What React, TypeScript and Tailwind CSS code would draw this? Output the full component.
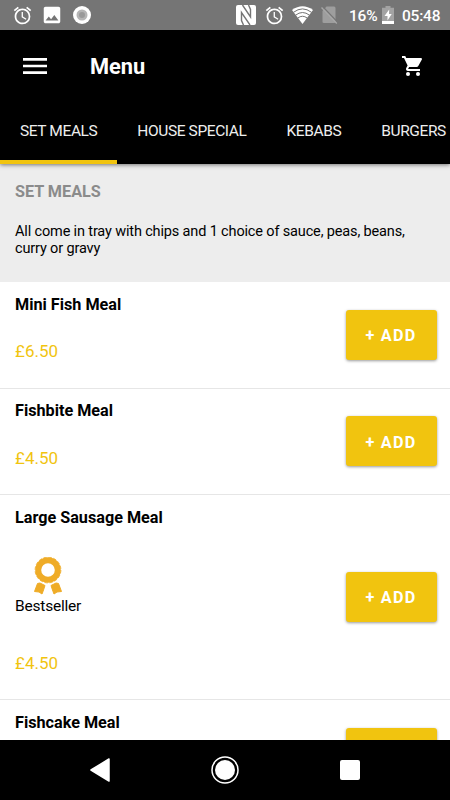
import React from 'react';
import { MdAccessAlarm, MdImage, MdMenu } from 'react-icons/md';

interface MealItem {
  name: string;
  price: string;
  bestseller?: boolean;
}

const tabs = ['SET MEALS', 'HOUSE SPECIAL', 'KEBABS', 'BURGERS'];

const meals: MealItem[] = [
  { name: 'Mini Fish Meal', price: '£6.50' },
  { name: 'Fishbite Meal', price: '£4.50' },
  { name: 'Large Sausage Meal', price: '£4.50', bestseller: true },
  { name: 'Fishcake Meal', price: '£4.50' },
];

function NfcIcon() {
  return (
    <svg className="ml-[145px] h-5 w-5 shrink-0" viewBox="0 0 20 20">
      <rect width="20" height="20" rx="2" fill="#fff" />
      <path d="M6.500 0 14.500 12V4.500L12.500 0" fill="none" stroke="#757575" strokeWidth="1.400" />
      <path d="M7.500 20 5.500 15.500V7.500L14 20" fill="none" stroke="#757575" strokeWidth="1.400" />
    </svg>
  );
}

function WifiIcon() {
  return (
    <svg className="ml-[7px] h-[18px] w-[21px] shrink-0" viewBox="0 0 21 18">
      <path d="M0 4Q10.500-3.500 21 4L10.500 18z" fill="#fff" />
      <path d="M1.500 6.300Q10.500-.5 19.500 6.300M3.500 9.200Q10.500 3.800 17.500 9.200M5.800 12Q10.500 8.500 15.200 12" fill="none" stroke="#757575" strokeWidth="1" />
    </svg>
  );
}

function NoSimIcon() {
  return (
    <svg className="ml-2 h-[18px] w-[17px] shrink-0" viewBox="0 0 17 18">
      <path d="M5.500.5H13q1.500 0 1.500 1.500v14q0 1-1.500 1H3q-1.500 0-1.500-1V5z" fill="#9e9e9e" />
      <path d="M1.800.7 17 16.600" stroke="#757575" strokeWidth="1.300" />
      <path d="M.5 1.500 15.800 17.500" stroke="#a8a8a8" strokeWidth="1.300" />
    </svg>
  );
}

function BatteryIcon() {
  return (
    <svg className="h-[18px] w-3 shrink-0" viewBox="0 0 12 18">
      <path d="M3.500 0h5v1.800H12V15H0V1.800h3.500z" fill="#a3a3a3" />
      <path d="M0 15h12v3H0zM7.200 3.500 2.500 10h3v4.500L9.700 8H7z" fill="#fff" />
    </svg>
  );
}

function CartIcon() {
  return (
    <svg className="size-6 shrink-0" viewBox="0 0 24 24" fill="currentColor">
      <path d="M1 2v2h2l3.600 7.600-1.350 2.400c-.8 1.400.2 3 1.750 3h12v-2H7.420a.25.25 0 0 1-.22-.37L8.100 13h7.450c.75 0 1.400-.4 1.750-1l3.580-6.500A1 1 0 0 0 20 4H5.200l-.93-2z" />
      <circle cx="7" cy="20" r="2" />
      <circle cx="17" cy="20" r="2" />
    </svg>
  );
}

function StatusBar() {
  return (
    <div className="flex h-[30px] shrink-0 items-center bg-[#757575] text-[15.5px] font-medium tracking-[-0.2px] text-white">
      <MdAccessAlarm className="ml-3 size-[21px] shrink-0" />
      <MdImage className="ml-2 size-[22px] shrink-0" />
      <svg className="ml-[10px] h-[18px] w-[18px] shrink-0" viewBox="0 0 18 18">
        <circle cx="9" cy="9" r="9" fill="#fff" />
        <circle cx="9" cy="9" r="5.500" fill="#b5b5b5" />
        <circle cx="9" cy="9" r="3" fill="#999" />
      </svg>
      <NfcIcon />
      <MdAccessAlarm className="ml-2 size-[21px] shrink-0" />
      <WifiIcon />
      <NoSimIcon />
      <span className="ml-[11px] w-[33px] shrink-0 whitespace-nowrap pt-px leading-5">16%</span>
      <BatteryIcon />
      <span className="ml-2 whitespace-nowrap pt-px leading-5">05:48</span>
    </div>
  );
}

function AppBar() {
  return (
    <div className="flex h-[70px] shrink-0 items-center bg-black pt-[2px] pl-[19px] pr-[25px] text-white">
      <MdMenu className="size-8 shrink-0" />
      <h1 className="ml-[39px] flex-1 pt-px text-[21.8px] font-bold leading-7">Menu</h1>
      <CartIcon />
    </div>
  );
}

function CategoryTabs() {
  return (
    <div className="relative z-10 flex h-16 shrink-0 overflow-x-clip bg-black shadow-[0_1px_4px_rgba(0,0,0,0.5)]">
      {tabs.map((tab, index) => (
        <button
          key={tab}
          className={`flex h-16 shrink-0 items-center border-b-[4px] px-5 pt-[3px] text-[15.5px] tracking-[-0.4px] text-[#eee] ${
            index === 0 ? 'border-[#f1c40f]' : 'border-transparent'
          }`}
        >
          {tab}
        </button>
      ))}
    </div>
  );
}

function BestsellerBadge() {
  return (
    <div className="mt-[29px]">
      <svg className="ml-[18px] h-[38px] w-[30px]" viewBox="0 0 30 38">
        <path
          d="M4.500 26.500 7 26l5 2.500-2 6-1 2.500-3-2-4.500-.5zM25.500 26.500 23 26l-5 2.500 2 6 1 2.500 3-2 4.500-.5z"
          fill="#efac27"
          stroke="#efac27"
          strokeLinejoin="round"
        />
        <circle cx="15" cy="13" r="9.800" fill="none" stroke="#efac27" strokeWidth="6" />
        <circle cx="15" cy="13" r="12.900" fill="none" stroke="#efac27" strokeWidth=".8" strokeDasharray="3.500 1.560" />
      </svg>
      <p className="mt-px text-[15.5px] leading-5 tracking-[-0.2px]">Bestseller</p>
    </div>
  );
}

function MealRow({ name, price, bestseller }: MealItem) {
  return (
    <div
      className={`flex shrink-0 items-center justify-between border-b border-[#e6e6e6] pl-[15px] pr-[13.500px] ${
        bestseller ? 'h-[205px]' : 'h-[106.500px]'
      }`}
    >
      <div className="h-full pt-[11.500px]">
        <h3 className="text-[16.2px] font-bold leading-[21px]">{name}</h3>
        {bestseller && <BestsellerBadge />}
        <p className={`text-[17px] leading-5 text-[#f1c40f] ${bestseller ? 'mt-[37px]' : 'mt-[26.500px]'}`}>{price}</p>
      </div>
      <button className="h-[50px] w-[91px] rounded-[3px] bg-[#f1c40f] pt-[3px] text-[16.2px] font-bold tracking-[1.2px] text-white shadow-[0_1px_3px_rgba(0,0,0,0.4)]">
        + ADD
      </button>
    </div>
  );
}

function NavigationBar() {
  return (
    <div className="flex h-[60px] shrink-0 items-center bg-black">
      <svg className="ml-[89px] h-6 w-[22px]" viewBox="0 0 22 24">
        <path d="M20 1 2 12l18 11z" fill="#fff" stroke="#fff" strokeWidth="1.500" strokeLinejoin="round" />
      </svg>
      <svg className="ml-[100px] h-7 w-7" viewBox="0 0 28 28">
        <circle cx="14" cy="14" r="13" fill="none" stroke="#fff" strokeWidth="1.500" />
        <circle cx="14" cy="14" r="10" fill="#fff" />
      </svg>
      <div className="ml-[101px] h-5 w-5 rounded-[2px] bg-white" />
    </div>
  );
}

export default function App() {
  return (
    <div className="flex h-[800px] w-[450px] flex-col overflow-hidden bg-white font-['Roboto',sans-serif] text-black">
      <StatusBar />
      <AppBar />
      <CategoryTabs />
      <main className="flex min-h-0 flex-1 flex-col overflow-hidden">
        <section className="h-[118px] shrink-0 bg-[#ededed] px-[15px] pt-[17px]">
          <h2 className="text-[16.2px] font-bold leading-[21px] text-[#8b8b8b]">SET MEALS</h2>
          <p className="mt-[21px] text-[14.5px] leading-[17px] tracking-[-0.15px]">
            All come in tray with chips and 1 choice of sauce, peas, beans, curry or gravy
          </p>
        </section>
        {meals.map((meal) => (
          <MealRow key={meal.name} {...meal} />
        ))}
      </main>
      <NavigationBar />
    </div>
  );
}
